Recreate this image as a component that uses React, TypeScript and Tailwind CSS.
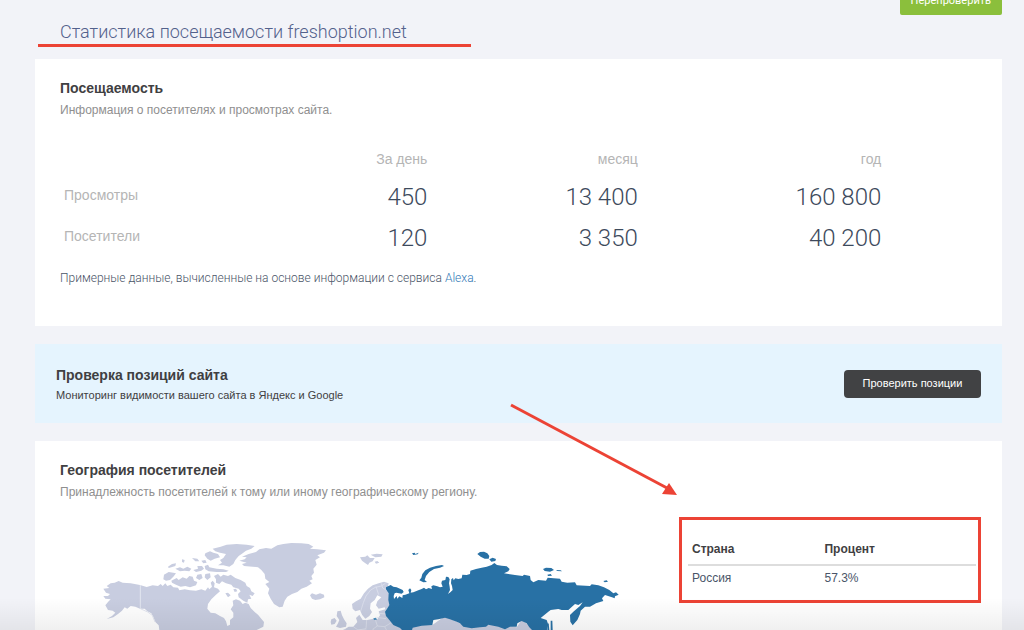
import type { ReactNode } from 'react'

interface TrafficRow {
  label: string
  day: string
  month: string
  year: string
}

const traffic: TrafficRow[] = [
  { label: 'Просмотры', day: '450', month: '13 400', year: '160 800' },
  { label: 'Посетители', day: '120', month: '3 350', year: '40 200' },
]

const countries = [{ name: 'Россия', percent: '57.3%' }]

function CardHeading({ title, children }: { title: string; children: ReactNode }) {
  return (
    <div>
      <h2 className="text-sm leading-5 font-bold text-[#3f4042]">{title}</h2>
      <p className="mt-1 text-xs leading-4 text-[#8f8f8f]">{children}</p>
    </div>
  )
}

function WorldMap() {
  return (
    <svg viewBox="0 0 1650 339" className="mt-[13px] ml-[55px] h-[113px] w-[550px] shrink-0" role="img" aria-label="Карта">
      {/* North America */}
      <g fill="#c8cde0">
        <path d="M40 176L58 174 50 168 62 160 74 158 86 153 98 158 122 160 150 165 170 171 188 166 204 168 212 162 218 168 226 160 232 168 242 164 250 172 264 173 268 181 284 178 300 181 318 182 334 178 346 182 354 172 358 178 366 170 362 158 368 152 374 160 372 172 384 176 390 184 378 194 364 208 354 222 352 236 362 248 376 250 390 258 402 264 408 274 412 288 420 284 420 270 430 262 430 248 422 238 430 226 428 212 438 208 450 212 458 222 466 218 476 222 482 234 494 246 504 254 512 264 522 276 520 290 500 300 520 310 500 339 240 339 220 310 208 300 206 286 196 276 190 262 184 250 172 244 164 236 150 236 136 230 122 228 112 236 104 232 96 242 84 252 70 262 50 267 66 258 76 248 68 242 54 240 46 226 54 216 62 208 46 206 40 198 54 198 60 192 48 188Z" />
        <path d="M222 134L236 126 250 128 258 130 250 140 240 150 228 152 220 148ZM244 152L260 144 266 150 278 142 290 146 298 138 308 140 312 152 322 156 318 166 300 172 286 168 272 170 258 164 246 158ZM234 110L246 102 258 100 256 108 244 112 236 114ZM256 116L270 112 280 116 292 110 304 116 298 124 284 122 270 124ZM306 84L322 86 328 94 316 94ZM276 88L284 90 282 98 276 96ZM310 120L324 116 322 108 336 108 342 116 334 122 318 126ZM334 92L346 90 350 98 340 100ZM322 134L334 132 338 144 328 150 318 144ZM344 108L354 104 358 112 380 116 400 118 416 122 408 126 380 126 356 124 346 118ZM346 132L360 130 362 142 352 150 344 142Z" />
        <path d="M346 70L360 64 370 68 384 72 390 82 374 86 362 92 352 86 344 76ZM368 56L392 50 410 44 440 42 470 44 494 48 484 56 468 62 458 70 446 78 436 90 430 102 418 110 400 106 384 106 396 98 390 90 400 84 408 72 390 68 376 64Z" />
        <path d="M372 138L384 132 392 140 400 134 414 138 422 134 436 144 452 150 466 158 470 168 480 174 484 184 494 190 488 198 478 194 484 206 474 208 472 218 460 212 446 202 444 192 452 184 446 176 430 172 424 164 408 160 396 154 388 162 378 158 378 148ZM430 178L438 176 442 184 434 186ZM406 190L414 188 422 196 414 202Z" />
      </g>
      <path d="M151 165v71l22 10 14 10 8 20" fill="none" stroke="#e3e6f0" strokeWidth="3" />

      {/* Greenland, Iceland, Svalbard, Europe */}
      <g transform="translate(420 0)">
        <g fill="#c8cde0">
          <path d="M28 92L44 88 50 82 36 80 56 72 78 66 88 58 108 54 124 56 142 46 160 42 184 39 214 40 236 42 250 50 240 56 262 58 288 61 282 68 262 76 270 82 256 90 260 104 250 116 252 128 244 138 248 148 238 152 246 160 230 170 214 176 202 186 186 192 172 200 164 212 158 230 148 232 132 222 122 206 114 190 118 176 106 162 118 156 106 146 104 132 94 120 84 112 68 110 42 108 36 102 50 98Z" />
          <path d="M240 196L246 190 258 194 270 190 282 194 283 202 270 208 256 210 246 206ZM390 82L406 80 412 76 420 84 434 84 428 94 418 98 414 105 404 98 396 92ZM422 74L440 71 458 73 454 80 436 82ZM434 95L442 93 448 98 438 101Z" />
          <path d="M322 244L332 242 336 256 342 268 350 280 348 290 330 294 318 290 324 280 328 270 320 258ZM304 268L314 264 320 272 314 282 304 284 302 276Z" />
          <path d="M366 222L378 214 392 206 402 190 414 176 428 166 446 160 462 155 476 160 472 176 478 196 482 220 474 232 466 244 472 262 486 278 504 290 520 302 520 339 300 339 322 306 344 298 356 290 370 290 382 276 378 264 388 254 398 270 412 270 430 266 442 268 450 256 446 244 466 238 464 232 446 236 438 226 442 214 454 202 442 196 434 210 422 220 420 236 426 246 418 258 406 266 396 254 390 240 376 244 368 236Z" />
        </g>
        <path d="M392 244l8-26 8-20 14-18 14-8 18-4 12-8M438 170l8 24M454 160l4 14 14 8M446 250l22 2M440 262l28 4M410 270l-2 26-24 4M436 268l6 20-14 10 12 8M442 288l22 2 20-12M370 290l14 10M346 300l20 8 18-8 24 0 20 6M464 290l10 18" fill="none" stroke="#e3e6f0" strokeWidth="2" />
        <path d="M430 265l8-2 3 6-9 1z" fill="#4d8fbd" />
      </g>

      {/* Kazakhstan, Mongolia, China */}
      <g transform="translate(780 0)">
        <path d="M130 300L200 284 247 285 285 258 340 285 430 282 500 292 515 270 545 292 575 300V339H130Z" fill="#c8cde0" />
        {/* Russia */}
        <g fill="#2871a5">
          <path d="M108 172L122 165 130 170 140 172 150 176 158 180 161 186 155 191 147 190 139 188 134 190 131 198 132 207 140 198 142 206 148 199 157 204 158 196 166 194 178 190 175 180 180 175 184 180 182 188 190 187 205 181 215 177 222 173 228 178 236 174 246 177 244 169 250 166 262 169 270 172 278 170 274 160 276 152 286 150 288 140 295 141 299 148 297 160 299 170 300 180 294 192 301 187 308 180 306 168 303 160 304 148 309 144 311 151 316 145 325 147 335 145 337 134 350 135 360 132 361 122 378 117 395 113 410 110 425 105 433 99 441 105 455 107 470 109 479 117 475 124 462 130 475 132 495 135 518 138 522 134 540 138 542 150 550 157 565 150 588 152 593 143 630 146 635 155 652 158 675 157 680 166 720 168 725 163 745 166 762 172 778 180 790 190 798 187 806 194 795 199 794 205 786 202 765 195 756 205 760 213 738 220 720 230 705 230 692 242 690 252 682 270 668 286 661 275 660 255 670 245 690 228 698 217 685 225 675 222 655 240 635 240 625 237 602 240 595 245 572 264 590 270 595 284 590 302 550 304 538 292 530 280 515 273 502 280 500 290 480 290 465 298 445 290 415 284 408 290 390 292 365 295 340 290 330 280 320 275 300 268 285 263 265 268 250 270 247 285 215 287 188 293 185 304 160 304 150 294 130 285 118 270 108 258 105 245 112 235 118 225 115 210 116 190 108 178Z" />
          <path d="M208 151L214 143 217 132 226 121 240 113 258 108 276 105 282 108 270 113 252 117 238 126 228 138 224 150 231 156 220 157ZM382 72L390 66 402 65 412 70 418 78 416 86 404 86 392 80ZM418 88L428 83 438 87 436 93 424 95ZM186 70L194 68 196 72 206 68 203 73 190 75ZM579 117L588 113 604 114 612 120 600 125 584 123ZM618 120L632 121 636 124 622 123ZM592 134L602 132 606 137 594 138ZM760 153L770 151 774 155 764 157ZM602 272L607 272 608 300 602 300ZM593 282L596 280 598 300 592 300Z" />
        </g>
      </g>
    </svg>
  )
}

export default function App() {
  return (
    <div className="relative flex h-screen flex-col overflow-hidden bg-[#f2f3f8] pr-[22px] pl-[35px] font-['Liberation_Sans',Arial,sans-serif] text-[#4a5568]">
      <header className="flex h-[59px] shrink-0 items-start justify-between">
        <h1 className="ml-[3px] h-[47px] w-[433px] border-b-3 border-[#ec4335] pt-5 pl-[22px] font-[Roboto,sans-serif] text-lg leading-6 font-light text-[#53618c]">
          Статистика посещаемости freshoption.net
        </h1>
        <button className="-mt-3 h-[27px] rounded-xs bg-[#8bbf3c] px-[11px] font-[Roboto,sans-serif] text-[11px] text-white">Перепроверить</button>
      </header>

      <section className="h-[267px] shrink-0 bg-white px-[25px] pt-[19px]">
        <CardHeading title="Посещаемость">Информация о посетителях и просмотрах сайта.</CardHeading>
        <table className="mt-6 w-[90%] table-fixed">
          <thead>
            <tr className="h-[34px] text-sm text-[#b5b5b5]">
              <td className="w-[25%]"></td>
              <th className="w-[20%] px-1 text-right font-normal">За день</th>
              <th className="w-[25.5%] px-1 text-right font-normal">месяц</th>
              <th className="w-[29.5%] px-1 text-right font-normal">год</th>
            </tr>
          </thead>
          <tbody className="font-[Roboto,sans-serif] text-2xl font-light text-[#3d4a5c]">
            {traffic.map(row => (
              <tr key={row.label} className="h-[41px]">
                <th className="px-1 pb-[3px] text-left font-['Liberation_Sans',Arial,sans-serif] text-sm font-normal text-[#b5b5b5]">{row.label}</th>
                <td className="px-1 text-right">{row.day}</td>
                <td className="px-1 text-right">{row.month}</td>
                <td className="px-1 text-right">{row.year}</td>
              </tr>
            ))}
          </tbody>
        </table>
        <p className="mt-3 font-[Roboto,sans-serif] text-xs leading-4 font-light">
          Примерные данные, вычисленные на основе информации с сервиса{' '}
          <a href="#alexa" className="text-[#337ab7]">Alexa</a>.
        </p>
      </section>

      <section className="mt-[18px] flex h-[79px] shrink-0 items-center justify-between bg-[#e5f4fe] pr-[21px] pl-[21px]">
        <div className="text-[#3f4042]">
          <h2 className="text-sm leading-5 font-bold">Проверка позиций сайта</h2>
          <p className="mt-[2px] text-[11px] leading-4">Мониторинг видимости вашего сайта в Яндекс и Google</p>
        </div>
        <button className="h-7 w-[137px] rounded bg-[#414244] text-[11px] text-white">Проверить позиции</button>
      </section>

      <section className="mt-[18px] flex-1 bg-white pt-[19px]">
        <div className="px-[25px]">
          <CardHeading title="География посетителей">Принадлежность посетителей к тому или иному географическому региону.</CardHeading>
        </div>
        <div className="mt-[17px] flex items-start justify-between pr-[21px]">
          <WorldMap />
          <div className="h-[86px] w-[302px] border-3 border-[#ec4335] pt-[17px] pr-[2px] pl-[6px] text-xs">
            <table className="w-full table-fixed">
              <thead>
                <tr className="h-7 border-b-2 border-[#dddddd] text-left leading-4 text-[#3f4042]">
                  <th className="w-[46%] px-1 pt-1 align-top">Страна</th>
                  <th className="px-1 pt-1 align-top">Процент</th>
                </tr>
              </thead>
              <tbody>
                {countries.map(country => (
                  <tr key={country.name} className="h-6">
                    <td className="px-1">{country.name}</td>
                    <td className="px-1">{country.percent}</td>
                  </tr>
                ))}
              </tbody>
            </table>
          </div>
        </div>
      </section>

      {/* pointer to the country table */}
      <svg viewBox="0 0 170 94" className="pointer-events-none absolute top-[403px] left-[509px] h-[94px] w-[170px]" aria-hidden="true">
        <path d="M2 2L158 85" stroke="#ec4335" strokeWidth="3" />
        <path d="M168 92L153 91 160 80Z" fill="#ec4335" />
      </svg>

      <div className="pointer-events-none absolute inset-x-0 bottom-0 h-8 bg-linear-to-b from-transparent to-black/6" />
    </div>
  )
}
